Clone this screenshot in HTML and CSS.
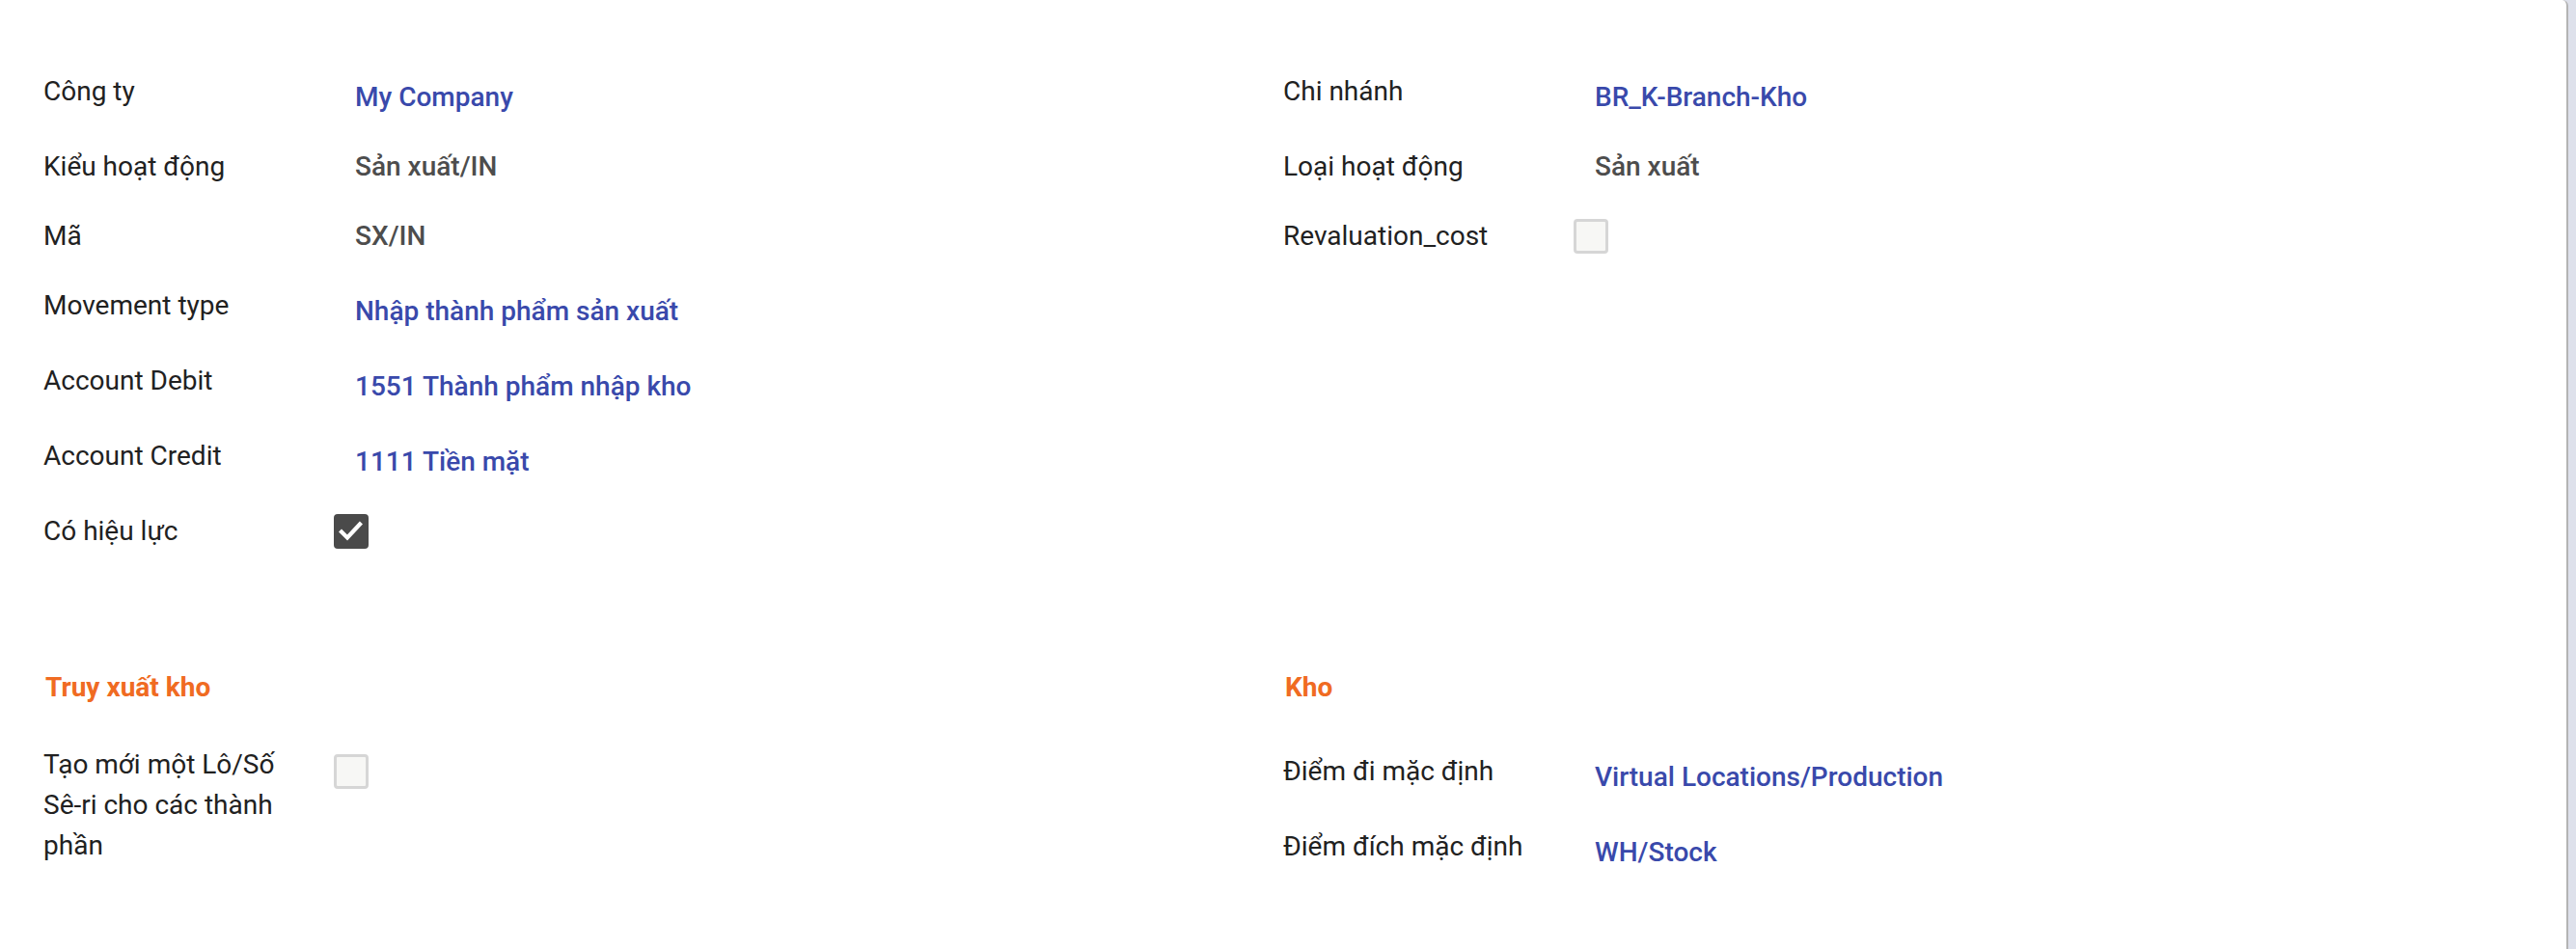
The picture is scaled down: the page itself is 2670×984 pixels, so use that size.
FILE: index.html
```html
<!DOCTYPE html>
<html lang="vi">
<head>
<meta charset="utf-8">
<title>Loại hoạt động</title>
<link rel="stylesheet" href="styles.css">
</head>
<body>
<div class="sheet">
  <div class="groups top">
    <div class="group">
      <div class="field link"><div class="label">Công ty</div><div class="value">My Company</div></div>
      <div class="field"><div class="label">Kiểu hoạt động</div><div class="value">Sản xuất/IN</div></div>
      <div class="field"><div class="label">Mã</div><div class="value">SX/IN</div></div>
      <div class="field link"><div class="label">Movement type</div><div class="value">Nhập thành phẩm sản xuất</div></div>
      <div class="field link"><div class="label">Account Debit</div><div class="value">1551 Thành phẩm nhập kho</div></div>
      <div class="field link"><div class="label">Account Credit</div><div class="value">1111 Tiền mặt</div></div>
      <div class="field check"><div class="label">Có hiệu lực</div><div class="value"><span class="box checked"><svg viewBox="0 0 36 36" width="36" height="36"><polyline points="8,18.5 14,24.5 27,10.5" fill="none" stroke="#fff" stroke-width="4.2" stroke-linecap="square" stroke-linejoin="miter"/></svg></span></div></div>
    </div>
    <div class="group">
      <div class="field link"><div class="label">Chi nhánh</div><div class="value">BR_K-Branch-Kho</div></div>
      <div class="field"><div class="label">Loại hoạt động</div><div class="value">Sản xuất</div></div>
      <div class="field check"><div class="label">Revaluation_cost</div><div class="value"><span class="box"></span></div></div>
    </div>
  </div>
  <div class="groups bottom">
    <div class="group">
      <div class="title">Truy xuất kho</div>
      <div class="field check multiline"><div class="label">Tạo mới một Lô/Số <span class="nowrap">Sê-ri</span> cho các thành phần</div><div class="value"><span class="box"></span></div></div>
    </div>
    <div class="group">
      <div class="title wide">Kho</div>
      <div class="field link"><div class="label">Điểm đi mặc định</div><div class="value">Virtual Locations/Production</div></div>
      <div class="field link"><div class="label">Điểm đích mặc định</div><div class="value">WH/Stock</div></div>
    </div>
  </div>
</div>
</body>
</html>
```
FILE: styles.css
```css
html, body {
  margin: 0;
  padding: 0;
}
body {
  background: #dee1eb;
  font-family: Roboto, "Noto Sans", "Liberation Sans", sans-serif;
  font-size: 28px;
  color: #212121;
}
.sheet {
  width: 2662px;
  min-height: 984px;
  box-sizing: border-box;
  background: #fff;
  border-right: 2px solid #b4b4b4;
  border-top-right-radius: 6px;
  padding: 74px 0 0 45px;
}
.groups {
  display: grid;
  grid-template-columns: 1285px 1285px;
}
.groups.bottom {
  margin-top: 90px;
}
.field {
  display: grid;
  grid-template-columns: 323px 1fr;
  line-height: 42px;
  margin-bottom: 30px;
}
.label {
  padding-right: 50px;
}
.nowrap {
  white-space: nowrap;
}
.value {
  color: #4d4d4d;
  font-weight: 500;
}
.field.link .value {
  padding-top: 6px;
  color: #3949ab;
}
.field.check .value {
  padding-top: 3px;
}
.field.check.multiline .value {
  padding-top: 10px;
}
.box {
  display: block;
  width: 36px;
  height: 36px;
  box-sizing: border-box;
  margin-left: -22px;
  border-radius: 4px;
  border: 3px solid #d6d6d6;
  background: #f7f7f5;
}
.box.checked {
  border: 0;
  background: #4a4a4a;
}
.box svg {
  display: block;
}
.title {
  color: #f06b22;
  font-weight: 700;
  line-height: 42px;
  padding-left: 2px;
  margin-bottom: 38px;
}
.title.wide {
  margin-bottom: 45px;
}
```
